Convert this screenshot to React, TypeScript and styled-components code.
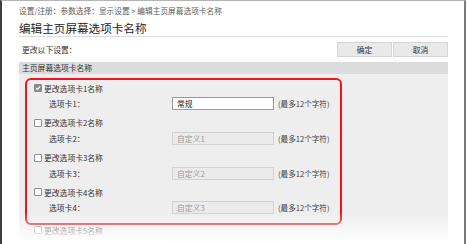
import React from "react";
import styled, { createGlobalStyle, css } from "styled-components";

const GlobalStyle = createGlobalStyle`
  html, body {
    margin: 0;
    padding: 0;
    background: #ffffff;
  }
  body {
    font-family: "Noto Sans CJK SC", "Noto Sans", sans-serif;
    color: #333;
    overflow: hidden;
  }
`;

const Frame = styled.div`
  position: relative;
  width: 466px;
  height: 244px;
  box-sizing: border-box;
  border-top: 1px solid #b4b4b4;
  border-left: 2px solid #3e3e3e;
  border-right: 2px solid #7a7a7a;
  padding: 0 16px 0 17px;
  overflow: hidden;

  &::after {
    content: "";
    position: absolute;
    left: -2px;
    right: -2px;
    top: 212px;
    bottom: 0;
    background: linear-gradient(rgba(255, 255, 255, 0), #ffffff 95%);
    pointer-events: none;
  }
`;

const Breadcrumb = styled.div`
  height: 18px;
  display: flex;
  align-items: center;
  font-size: 7.7px;
  color: #606060;
  white-space: nowrap;
`;

const Title = styled.h1`
  margin: 0;
  padding-top: 2px;
  height: 15px;
  line-height: 15px;
  font-size: 11.6px;
  font-weight: 400;
  color: #1e1e1e;
  border-bottom: 1px solid #dedede;
`;

const Toolbar = styled.div`
  margin-top: 1px;
  height: 23px;
  display: flex;
  align-items: center;
  justify-content: space-between;
  font-size: 7.8px;
  padding-left: 3px;
`;

const Buttons = styled.div`
  display: flex;
  gap: 1px;
`;

const Button = styled.button`
  width: 55px;
  height: 15px;
  padding: 0;
  font-family: inherit;
  font-size: 7.8px;
  color: #333;
  background: #e9e9e9;
  border: 1px solid #d6d6d6;
`;

const SectionHeader = styled.div`
  margin-top: 1px;
  height: 12px;
  line-height: 12px;
  padding-left: 3px;
  font-size: 7.8px;
  color: #333;
  background: #dcdcdc;
`;

const SectionBody = styled.div`
  background: #eeeeee;
  padding: 4px 0 30px 6px;
`;

const Highlight = styled.div`
  width: 317px;
  box-sizing: border-box;
  border: 2px solid #f2141c;
  border-radius: 6px;
  padding: 1px 0 3px 7px;
`;

const Group = styled.div<{ $outside?: boolean }>`
  display: flex;
  flex-direction: column;
  ${(p) =>
    p.$outside &&
    css`
      padding-left: 9px;
      margin-top: -2px;
    `}
`;

const CheckRow = styled.label`
  height: 14px;
  display: flex;
  align-items: center;
  gap: 2px;
  font-size: 7.8px;
  color: #333;
`;

const Box = styled.span<{ $checked?: boolean }>`
  width: 8px;
  height: 8px;
  box-sizing: border-box;
  border-radius: 1px;
  display: inline-flex;
  align-items: center;
  justify-content: center;
  border: 1px solid ${(p) => (p.$checked ? "#8a8a8a" : "#8f8f8f")};
  background: ${(p) => (p.$checked ? "#8a8a8a" : "#ffffff")};
`;

const FieldRow = styled.div`
  height: 17px;
  margin-bottom: 3.8px;
  display: flex;
  align-items: center;
  padding-left: 15px;
  font-size: 7.8px;
`;

const FieldLabel = styled.span`
  width: 123px;
  color: #333;
`;

const Input = styled.div<{ $disabled?: boolean }>`
  width: 102px;
  height: 13px;
  box-sizing: border-box;
  padding-left: 4px;
  display: flex;
  align-items: center;
  font-size: 7.8px;
  border: 1px solid ${(p) => (p.$disabled ? "#d2d2d2" : "#9a9a9a")};
  background: ${(p) => (p.$disabled ? "#ebebeb" : "#ffffff")};
  color: ${(p) => (p.$disabled ? "#9a9a9a" : "#222")};
`;

const Hint = styled.span`
  margin-left: 4px;
  color: #444;
  font-size: 7.6px;
`;

type Tab = { n: number; value: string; checked: boolean };

const tabs: Tab[] = [
  { n: 1, value: "常规", checked: true },
  { n: 2, value: "自定义1", checked: false },
  { n: 3, value: "自定义2", checked: false },
  { n: 4, value: "自定义3", checked: false },
];

const TabGroup: React.FC<{ tab: Tab; outside?: boolean }> = ({ tab, outside }) => (
  <Group $outside={outside}>
    <CheckRow>
      <Box $checked={tab.checked}>
        {tab.checked && (
          <svg width="6" height="6" viewBox="0 0 6 6">
            <path d="M1 3.1 L2.4 4.5 L5 1.4" fill="none" stroke="#fff" strokeWidth="1.2" />
          </svg>
        )}
      </Box>
      更改选项卡{tab.n}名称
    </CheckRow>
    <FieldRow>
      <FieldLabel>选项卡{tab.n}：</FieldLabel>
      <Input $disabled={!tab.checked}>{tab.value}</Input>
      <Hint>(最多12个字符)</Hint>
    </FieldRow>
  </Group>
);

export default function App() {
  return (
    <>
      <GlobalStyle />
      <Frame>
        <Breadcrumb>设置/注册：参数选择：显示设置 &gt; 编辑主页屏幕选项卡名称</Breadcrumb>
        <Title>编辑主页屏幕选项卡名称</Title>
        <Toolbar>
          <span>更改以下设置：</span>
          <Buttons>
            <Button>确定</Button>
            <Button>取消</Button>
          </Buttons>
        </Toolbar>
        <SectionHeader>主页屏幕选项卡名称</SectionHeader>
        <SectionBody>
          <Highlight>
            {tabs.map((t) => (
              <TabGroup key={t.n} tab={t} />
            ))}
          </Highlight>
          <TabGroup outside tab={{ n: 5, value: "自定义4", checked: false }} />
        </SectionBody>
      </Frame>
    </>
  );
}
